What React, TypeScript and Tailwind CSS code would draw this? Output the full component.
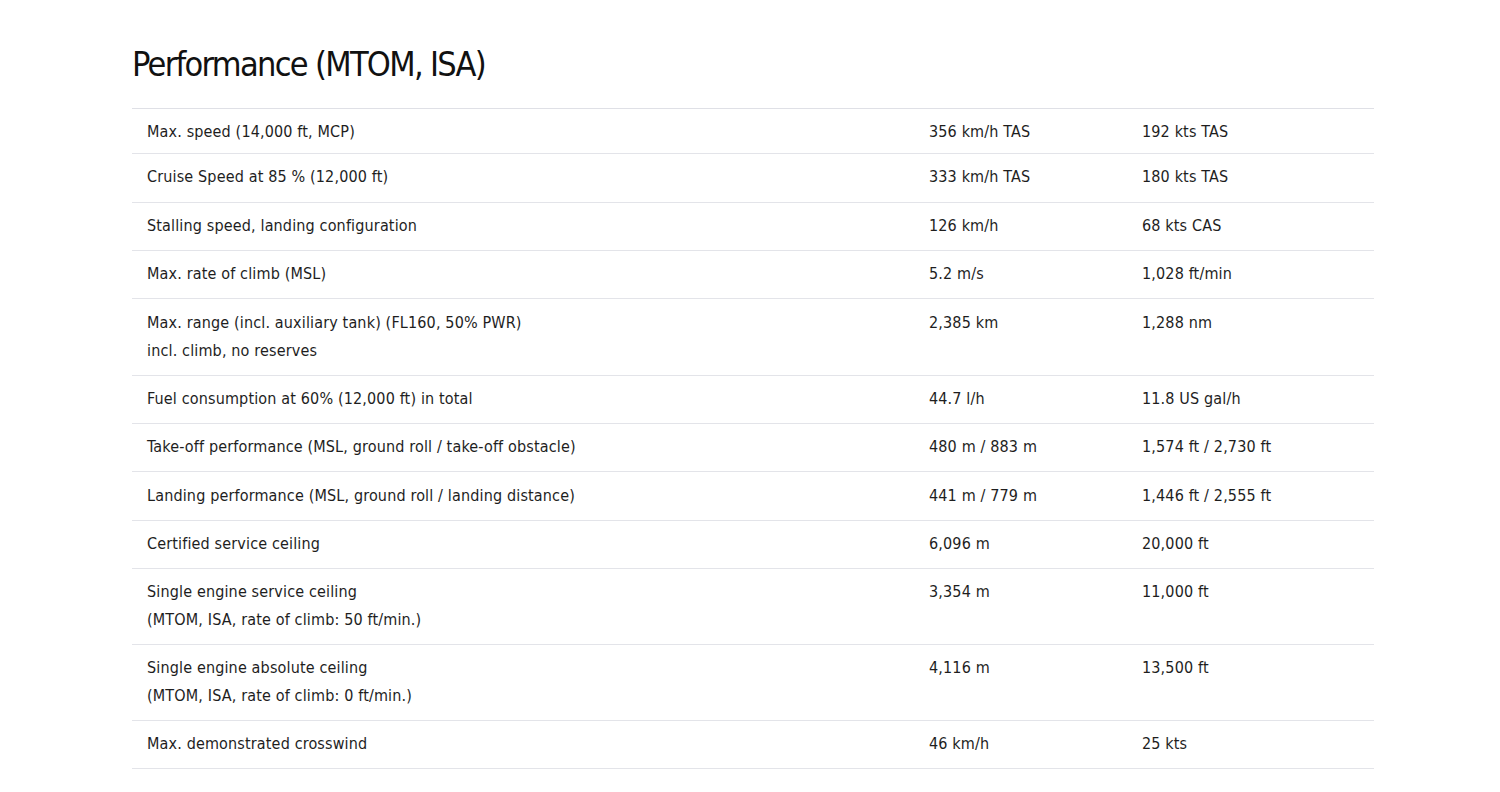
import React from "react";

const rows: [string[], string, string, string][] = [
  [["Max. speed (14,000 ft, MCP)"], "356 km/h TAS", "192 kts TAS", "pt-[9px] pb-[7px]"],
  [["Cruise Speed at 85 % (12,000 ft)"], "333 km/h TAS", "180 kts TAS", "pt-[9px] pb-[11px]"],
  [["Stalling speed, landing configuration"], "126 km/h", "68 kts CAS", "pt-[9px] pb-[10px]"],
  [["Max. rate of climb (MSL)"], "5.2 m/s", "1,028 ft/min", "pt-[9px] pb-[10px]"],
  [["Max. range (incl. auxiliary tank) (FL160, 50% PWR)", "incl. climb, no reserves"], "2,385 km", "1,288 nm", "pt-[10px] pb-[10px]"],
  [["Fuel consumption at 60% (12,000 ft) in total"], "44.7 l/h", "11.8 US gal/h", "pt-[9px] pb-[10px]"],
  [["Take-off performance (MSL, ground roll / take-off obstacle)"], "480 m / 883 m", "1,574 ft / 2,730 ft", "pt-[9px] pb-[10px]"],
  [["Landing performance (MSL, ground roll / landing distance)"], "441 m / 779 m", "1,446 ft / 2,555 ft", "pt-[10px] pb-[10px]"],
  [["Certified service ceiling"], "6,096 m", "20,000 ft", "pt-[9px] pb-[10px]"],
  [["Single engine service ceiling", "(MTOM, ISA, rate of climb: 50 ft/min.)"], "3,354 m", "11,000 ft", "pt-[9px] pb-[10px]"],
  [["Single engine absolute ceiling", "(MTOM, ISA, rate of climb: 0 ft/min.)"], "4,116 m", "13,500 ft", "pt-[9px] pb-[10px]"],
  [["Max. demonstrated crosswind"], "46 km/h", "25 kts", "pt-[9px] pb-[10px]"],
];

export default function App() {
  return (
    <div
      className="min-h-[792px] bg-white pl-[132px] pr-[126px] pt-[40px] text-[#1e1e1e]"
      style={{ fontFamily: '"DejaVu Sans Condensed", "Liberation Sans", sans-serif' }}
    >
      <h1 className="text-[34px] leading-[48px] font-normal text-[#111] tracking-[-1.7px] mb-[20px]">
        Performance (MTOM, ISA)
      </h1>
      <div className="border-t border-[#dfe0e6]">
        {rows.map(([label, a, b, pad], i) => (
          <div
            key={i}
            className={`grid grid-cols-[797px_213px_1fr] border-b border-[#e3e4e9] text-[16px] leading-[28px] tracking-[0.15px] ${pad}`}
          >
            <div className="pl-[15px]">
              {label.map((l, j) => (
                <div key={j}>{l}</div>
              ))}
            </div>
            <div>{a}</div>
            <div>{b}</div>
          </div>
        ))}
      </div>
    </div>
  );
}
